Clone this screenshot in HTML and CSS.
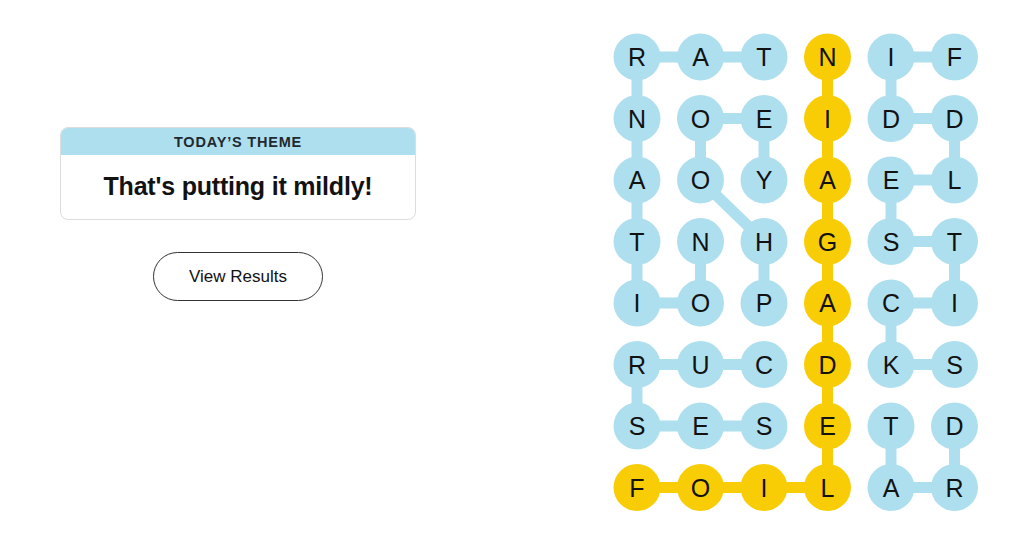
FILE: index.html
```html
<!DOCTYPE html>
<html lang="en">
<head>
<meta charset="utf-8">
<title>Strands</title>
<link rel="stylesheet" href="styles.css">
</head>
<body>
<main class="page">
  <section class="side">
    <div class="theme-card">
      <div class="theme-head">TODAY’S THEME</div>
      <div class="theme-body">That's putting it mildly!</div>
    </div>
    <button class="results-btn">View Results</button>
  </section>
  <section class="board">
    <svg class="grid" width="368" height="481" viewBox="0 0 368 481" xmlns="http://www.w3.org/2000/svg">
      <g class="links blue">
        <!-- TARNATION -->
        <line x1="25" y1="25" x2="152" y2="25"/>
        <line x1="25" y1="25" x2="25" y2="271"/>
        <line x1="25" y1="271" x2="88.5" y2="271"/>
        <line x1="88.5" y1="271" x2="88.5" y2="209.5"/>
        <!-- PHOOEY -->
        <line x1="88.5" y1="86.5" x2="152" y2="86.5"/>
        <line x1="88.5" y1="86.5" x2="88.5" y2="148"/>
        <line x1="152" y1="86.5" x2="152" y2="148"/>
        <line x1="88.5" y1="148" x2="152" y2="209.5"/>
        <line x1="152" y1="209.5" x2="152" y2="271"/>
        <!-- FIDDLESTICKS -->
        <line x1="279" y1="25" x2="342.5" y2="25"/>
        <line x1="279" y1="25" x2="279" y2="86.5"/>
        <line x1="279" y1="86.5" x2="342.5" y2="86.5"/>
        <line x1="342.5" y1="86.5" x2="342.5" y2="148"/>
        <line x1="342.5" y1="148" x2="279" y2="148"/>
        <line x1="279" y1="148" x2="279" y2="209.5"/>
        <line x1="279" y1="209.5" x2="342.5" y2="209.5"/>
        <line x1="342.5" y1="209.5" x2="342.5" y2="271"/>
        <line x1="342.5" y1="271" x2="279" y2="271"/>
        <line x1="279" y1="271" x2="279" y2="332.5"/>
        <line x1="279" y1="332.5" x2="342.5" y2="332.5"/>
        <!-- CURSES -->
        <line x1="25" y1="332.5" x2="152" y2="332.5"/>
        <line x1="25" y1="332.5" x2="25" y2="394"/>
        <line x1="25" y1="394" x2="152" y2="394"/>
        <!-- DRAT -->
        <line x1="279" y1="394" x2="279" y2="455.5"/>
        <line x1="279" y1="455.5" x2="342.5" y2="455.5"/>
        <line x1="342.5" y1="455.5" x2="342.5" y2="394"/>
      </g>
      <g class="links gold">
        <line x1="215.5" y1="25" x2="215.5" y2="455.5"/>
        <line x1="215.5" y1="455.5" x2="25" y2="455.5"/>
      </g>
      <g class="cells">
        <g class="c"><circle cx="25" cy="25" r="23.5"/><text x="25" y="25">R</text></g>
        <g class="c"><circle cx="88.5" cy="25" r="23.5"/><text x="88.5" y="25">A</text></g>
        <g class="c"><circle cx="152" cy="25" r="23.5"/><text x="152" y="25">T</text></g>
        <g class="c g"><circle cx="215.5" cy="25" r="23.5"/><text x="215.5" y="25">N</text></g>
        <g class="c"><circle cx="279" cy="25" r="23.5"/><text x="279" y="25">I</text></g>
        <g class="c"><circle cx="342.5" cy="25" r="23.5"/><text x="342.5" y="25">F</text></g>

        <g class="c"><circle cx="25" cy="86.5" r="23.5"/><text x="25" y="86.5">N</text></g>
        <g class="c"><circle cx="88.5" cy="86.5" r="23.5"/><text x="88.5" y="86.5">O</text></g>
        <g class="c"><circle cx="152" cy="86.5" r="23.5"/><text x="152" y="86.5">E</text></g>
        <g class="c g"><circle cx="215.5" cy="86.5" r="23.5"/><text x="215.5" y="86.5">I</text></g>
        <g class="c"><circle cx="279" cy="86.5" r="23.5"/><text x="279" y="86.5">D</text></g>
        <g class="c"><circle cx="342.5" cy="86.5" r="23.5"/><text x="342.5" y="86.5">D</text></g>

        <g class="c"><circle cx="25" cy="148" r="23.5"/><text x="25" y="148">A</text></g>
        <g class="c"><circle cx="88.5" cy="148" r="23.5"/><text x="88.5" y="148">O</text></g>
        <g class="c"><circle cx="152" cy="148" r="23.5"/><text x="152" y="148">Y</text></g>
        <g class="c g"><circle cx="215.5" cy="148" r="23.5"/><text x="215.5" y="148">A</text></g>
        <g class="c"><circle cx="279" cy="148" r="23.5"/><text x="279" y="148">E</text></g>
        <g class="c"><circle cx="342.5" cy="148" r="23.5"/><text x="342.5" y="148">L</text></g>

        <g class="c"><circle cx="25" cy="209.5" r="23.5"/><text x="25" y="209.5">T</text></g>
        <g class="c"><circle cx="88.5" cy="209.5" r="23.5"/><text x="88.5" y="209.5">N</text></g>
        <g class="c"><circle cx="152" cy="209.5" r="23.5"/><text x="152" y="209.5">H</text></g>
        <g class="c g"><circle cx="215.5" cy="209.5" r="23.5"/><text x="215.5" y="209.5">G</text></g>
        <g class="c"><circle cx="279" cy="209.5" r="23.5"/><text x="279" y="209.5">S</text></g>
        <g class="c"><circle cx="342.5" cy="209.5" r="23.5"/><text x="342.5" y="209.5">T</text></g>

        <g class="c"><circle cx="25" cy="271" r="23.5"/><text x="25" y="271">I</text></g>
        <g class="c"><circle cx="88.5" cy="271" r="23.5"/><text x="88.5" y="271">O</text></g>
        <g class="c"><circle cx="152" cy="271" r="23.5"/><text x="152" y="271">P</text></g>
        <g class="c g"><circle cx="215.5" cy="271" r="23.5"/><text x="215.5" y="271">A</text></g>
        <g class="c"><circle cx="279" cy="271" r="23.5"/><text x="279" y="271">C</text></g>
        <g class="c"><circle cx="342.5" cy="271" r="23.5"/><text x="342.5" y="271">I</text></g>

        <g class="c"><circle cx="25" cy="332.5" r="23.5"/><text x="25" y="332.5">R</text></g>
        <g class="c"><circle cx="88.5" cy="332.5" r="23.5"/><text x="88.5" y="332.5">U</text></g>
        <g class="c"><circle cx="152" cy="332.5" r="23.5"/><text x="152" y="332.5">C</text></g>
        <g class="c g"><circle cx="215.5" cy="332.5" r="23.5"/><text x="215.5" y="332.5">D</text></g>
        <g class="c"><circle cx="279" cy="332.5" r="23.5"/><text x="279" y="332.5">K</text></g>
        <g class="c"><circle cx="342.5" cy="332.5" r="23.5"/><text x="342.5" y="332.5">S</text></g>

        <g class="c"><circle cx="25" cy="394" r="23.5"/><text x="25" y="394">S</text></g>
        <g class="c"><circle cx="88.5" cy="394" r="23.5"/><text x="88.5" y="394">E</text></g>
        <g class="c"><circle cx="152" cy="394" r="23.5"/><text x="152" y="394">S</text></g>
        <g class="c g"><circle cx="215.5" cy="394" r="23.5"/><text x="215.5" y="394">E</text></g>
        <g class="c"><circle cx="279" cy="394" r="23.5"/><text x="279" y="394">T</text></g>
        <g class="c"><circle cx="342.5" cy="394" r="23.5"/><text x="342.5" y="394">D</text></g>

        <g class="c g"><circle cx="25" cy="455.5" r="23.5"/><text x="25" y="455.5">F</text></g>
        <g class="c g"><circle cx="88.5" cy="455.5" r="23.5"/><text x="88.5" y="455.5">O</text></g>
        <g class="c g"><circle cx="152" cy="455.5" r="23.5"/><text x="152" y="455.5">I</text></g>
        <g class="c g"><circle cx="215.5" cy="455.5" r="23.5"/><text x="215.5" y="455.5">L</text></g>
        <g class="c"><circle cx="279" cy="455.5" r="23.5"/><text x="279" y="455.5">A</text></g>
        <g class="c"><circle cx="342.5" cy="455.5" r="23.5"/><text x="342.5" y="455.5">R</text></g>
      </g>
    </svg>
  </section>
</main>
</body>
</html>
```

FILE: styles.css
```css
* { box-sizing: border-box; }
html, body { margin: 0; padding: 0; background: #ffffff; }
body {
  font-family: "Liberation Sans", Arial, sans-serif;
  color: #121212;
  width: 1024px;
  height: 541px;
  overflow: hidden;
}
.page {
  display: flex;
  height: 541px;
}
.side {
  width: 476px;
  display: flex;
  flex-direction: column;
  align-items: center;
  padding-top: 127px;
}
.theme-card {
  width: 356px;
  border: 1px solid #dcdcdc;
  border-radius: 8px;
  overflow: hidden;
  background: #fff;
}
.theme-head {
  background: #aedfee;
  height: 27px;
  display: flex;
  align-items: center;
  justify-content: center;
  font-size: 14.5px;
  font-weight: 700;
  letter-spacing: 0.8px;
  color: #1f2a30;
}
.theme-body {
  height: 64px;
  display: flex;
  align-items: center;
  justify-content: center;
  font-size: 25px;
  font-weight: 700;
  letter-spacing: -0.2px;
  color: #121212;
  padding-bottom: 2px;
}
.results-btn {
  margin-top: 32px;
  width: 170px;
  height: 49px;
  border: 1px solid #333;
  border-radius: 25px;
  background: #fff;
  font-family: "Liberation Sans", Arial, sans-serif;
  font-size: 17px;
  color: #121212;
  padding: 0;
}
.board {
  margin-left: 136px;
  padding-top: 32px;
}
.grid { display: block; }
.links line {
  stroke-width: 11;
  stroke-linecap: butt;
}
.links.blue line { stroke: #aedfee; }
.links.gold line { stroke: #f8cd05; }
.cells circle { fill: #aedfee; }
.cells .g circle { fill: #f8cd05; }
.cells text {
  font-family: "Liberation Sans", Arial, sans-serif;
  font-size: 25px;
  fill: #121212;
  text-anchor: middle;
  dominant-baseline: central;
}
```
